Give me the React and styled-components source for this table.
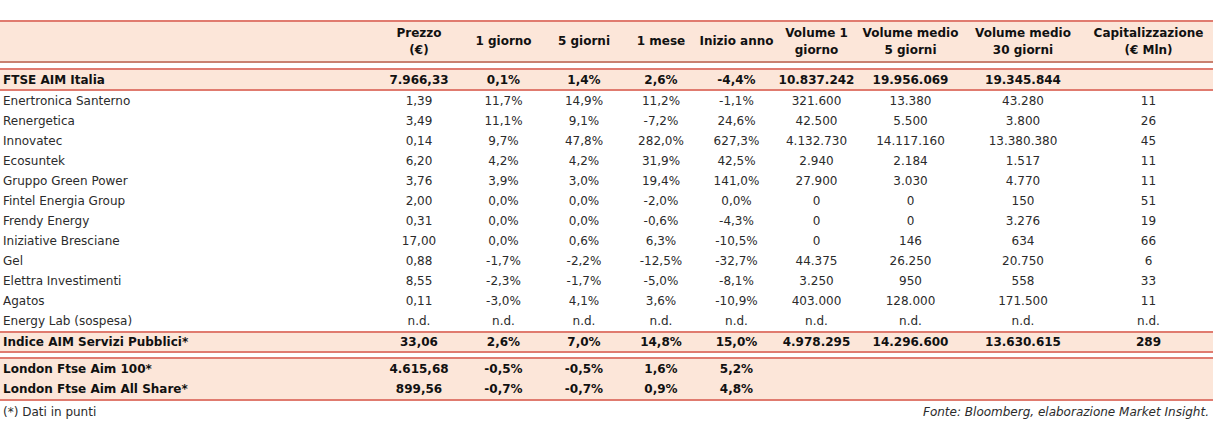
import React from "react";
import styled, { createGlobalStyle } from "styled-components";

const GlobalStyle = createGlobalStyle`
  html, body {
    margin: 0;
    padding: 0;
    background: #fff;
  }
  body {
    font-family: "DejaVu Sans", "Noto Sans", sans-serif;
    color: #1a1a1a;
  }
`;

const COLS = "376px 86px 83px 78px 76px 75px 85px 103px 122px 129px";
const LINE = "#e07b6f";
const BAND = "#fce6d9";

const Page = styled.div`
  width: 1213px;
  padding-top: 20px;
`;

const Band = styled.div`
  background: ${BAND};
  border-top: 2px solid ${LINE};
  border-bottom: 2px solid ${(p) => p.$bottom || LINE};
`;

const Gap = styled.div`
  height: ${(p) => p.$h}px;
`;

const Row = styled.div`
  display: grid;
  grid-template-columns: ${COLS};
  height: ${(p) => p.$h || 20}px;
  align-items: center;
  font-size: 12px;
  font-weight: ${(p) => (p.$bold ? 700 : 400)};
  color: ${(p) => (p.$bold ? "#111" : "#2b2b2b")};
`;

const HeadRow = styled(Row)`
  height: 39px;
  font-weight: 700;
  color: #111;
  line-height: 17px;
`;

const Name = styled.div`
  padding-left: 3px;
  white-space: nowrap;
`;

const Cell = styled.div`
  text-align: center;
  white-space: nowrap;
`;

const Footer = styled.div`
  display: flex;
  justify-content: space-between;
  align-items: center;
  height: 22px;
  font-size: 12px;
  color: #2b2b2b;
  padding: 0 4px 0 3px;
`;

const Source = styled.span`
  font-style: italic;
`;

const headers = [
  ["Prezzo", "(€)"],
  ["1 giorno"],
  ["5 giorni"],
  ["1 mese"],
  ["Inizio anno"],
  ["Volume 1", "giorno"],
  ["Volume medio", "5 giorni"],
  ["Volume medio", "30 giorni"],
  ["Capitalizzazione", "(€ Mln)"],
];

const ftse = ["FTSE AIM Italia", "7.966,33", "0,1%", "1,4%", "2,6%", "-4,4%", "10.837.242", "19.956.069", "19.345.844", ""];

const rows = [
  ["Enertronica Santerno", "1,39", "11,7%", "14,9%", "11,2%", "-1,1%", "321.600", "13.380", "43.280", "11"],
  ["Renergetica", "3,49", "11,1%", "9,1%", "-7,2%", "24,6%", "42.500", "5.500", "3.800", "26"],
  ["Innovatec", "0,14", "9,7%", "47,8%", "282,0%", "627,3%", "4.132.730", "14.117.160", "13.380.380", "45"],
  ["Ecosuntek", "6,20", "4,2%", "4,2%", "31,9%", "42,5%", "2.940", "2.184", "1.517", "11"],
  ["Gruppo Green Power", "3,76", "3,9%", "3,0%", "19,4%", "141,0%", "27.900", "3.030", "4.770", "11"],
  ["Fintel Energia Group", "2,00", "0,0%", "0,0%", "-2,0%", "0,0%", "0", "0", "150", "51"],
  ["Frendy Energy", "0,31", "0,0%", "0,0%", "-0,6%", "-4,3%", "0", "0", "3.276", "19"],
  ["Iniziative Bresciane", "17,00", "0,0%", "0,6%", "6,3%", "-10,5%", "0", "146", "634", "66"],
  ["Gel", "0,88", "-1,7%", "-2,2%", "-12,5%", "-32,7%", "44.375", "26.250", "20.750", "6"],
  ["Elettra Investimenti", "8,55", "-2,3%", "-1,7%", "-5,0%", "-8,1%", "3.250", "950", "558", "33"],
  ["Agatos", "0,11", "-3,0%", "4,1%", "3,6%", "-10,9%", "403.000", "128.000", "171.500", "11"],
  ["Energy Lab (sospesa)", "n.d.", "n.d.", "n.d.", "n.d.", "n.d.", "n.d.", "n.d.", "n.d.", "n.d."],
];

const indice = ["Indice AIM Servizi Pubblici*", "33,06", "2,6%", "7,0%", "14,8%", "15,0%", "4.978.295", "14.296.600", "13.630.615", "289"];

const london = [
  ["London Ftse Aim 100*", "4.615,68", "-0,5%", "-0,5%", "1,6%", "5,2%", "", "", "", ""],
  ["London Ftse Aim All Share*", "899,56", "-0,7%", "-0,7%", "0,9%", "4,8%", "", "", "", ""],
];

const DataRow = ({ data, bold, h }) => (
  <Row $bold={bold} $h={h}>
    <Name>{data[0]}</Name>
    {data.slice(1).map((v, i) => (
      <Cell key={i}>{v}</Cell>
    ))}
  </Row>
);

const App = () => {
  return (
    <Page>
      <GlobalStyle />
      <Band $bottom="#c9806f">
        <HeadRow>
          <Name />
          {headers.map((h, i) => (
            <Cell key={i}>
              {h.map((line, j) => (
                <div key={j}>{line}</div>
              ))}
            </Cell>
          ))}
        </HeadRow>
      </Band>
      <Gap $h={5} />
      <Band>
        <DataRow data={ftse} bold h={19} />
      </Band>
      {rows.map((r) => (
        <DataRow key={r[0]} data={r} />
      ))}
      <Band>
        <DataRow data={indice} bold h={18} />
      </Band>
      <Gap $h={4} />
      <Band>
        {london.map((r) => (
          <DataRow key={r[0]} data={r} bold />
        ))}
      </Band>
      <Footer>
        <span>(*) Dati in punti</span>
        <Source>Fonte: Bloomberg, elaborazione Market Insight.</Source>
      </Footer>
    </Page>
  );
};

export default App;
